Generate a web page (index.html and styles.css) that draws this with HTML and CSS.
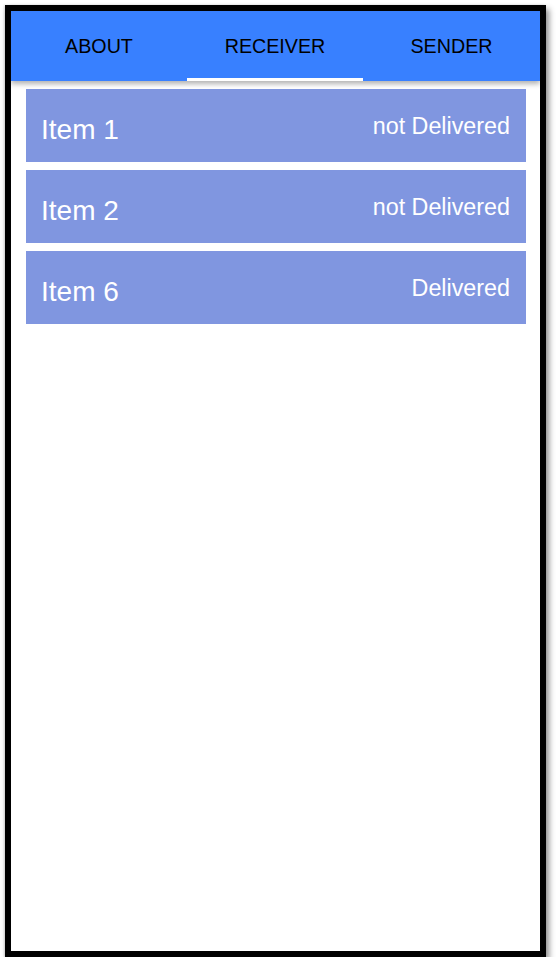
FILE: index.html
```html
<!DOCTYPE html>
<html>
<head>
<meta charset="utf-8">
<link rel="stylesheet" href="styles.css">
</head>
<body>
<div class="device">
  <div class="tabs">
    <div class="tab">ABOUT</div>
    <div class="tab active">RECEIVER</div>
    <div class="tab">SENDER</div>
  </div>
  <div class="list">
    <div class="item"><span class="title">Item 1</span><span class="status">not Delivered</span></div>
    <div class="item"><span class="title">Item 2</span><span class="status">not Delivered</span></div>
    <div class="item"><span class="title">Item 6</span><span class="status">Delivered</span></div>
  </div>
</div>
</body>
</html>
```
FILE: styles.css
```css
html, body {
  margin: 0;
  padding: 0;
  background: #fff;
}
body {
  font-family: "Liberation Sans", Arial, sans-serif;
}
.device {
  margin: 5px 0 0 5px;
  width: 529px;
  height: 940px;
  border: 6px solid #000;
  background: #fff;
  box-shadow: 3px 4px 6px rgba(0,0,0,0.45), -1px 0 2px rgba(0,0,0,0.15);
  display: flex;
  flex-direction: column;
}
.tabs {
  height: 70px;
  background: #3880ff;
  display: grid;
  grid-template-columns: 176px 176px 1fr;
  box-shadow: 0 3px 5px rgba(0,0,0,0.3);
  position: relative;
  z-index: 1;
}
.tab {
  display: flex;
  align-items: center;
  justify-content: center;
  font-size: 19.7px;
  color: #000;
  box-sizing: border-box;
}
.active {
  border-bottom: 3px solid #fff;
  padding-top: 3px;
}
.list {
  padding: 8px 14px 0 15px;
  display: flex;
  flex-direction: column;
  gap: 8px;
}
.item {
  height: 73px;
  background: #8096e0;
  color: #fff;
  display: flex;
  justify-content: space-between;
  align-items: flex-start;
  padding: 0 16px 0 15px;
}
.title {
  font-size: 28px;
  line-height: 32px;
  margin-top: 25px;
}
.status {
  font-size: 23.3px;
  line-height: 26px;
  margin-top: 24px;
}
```
